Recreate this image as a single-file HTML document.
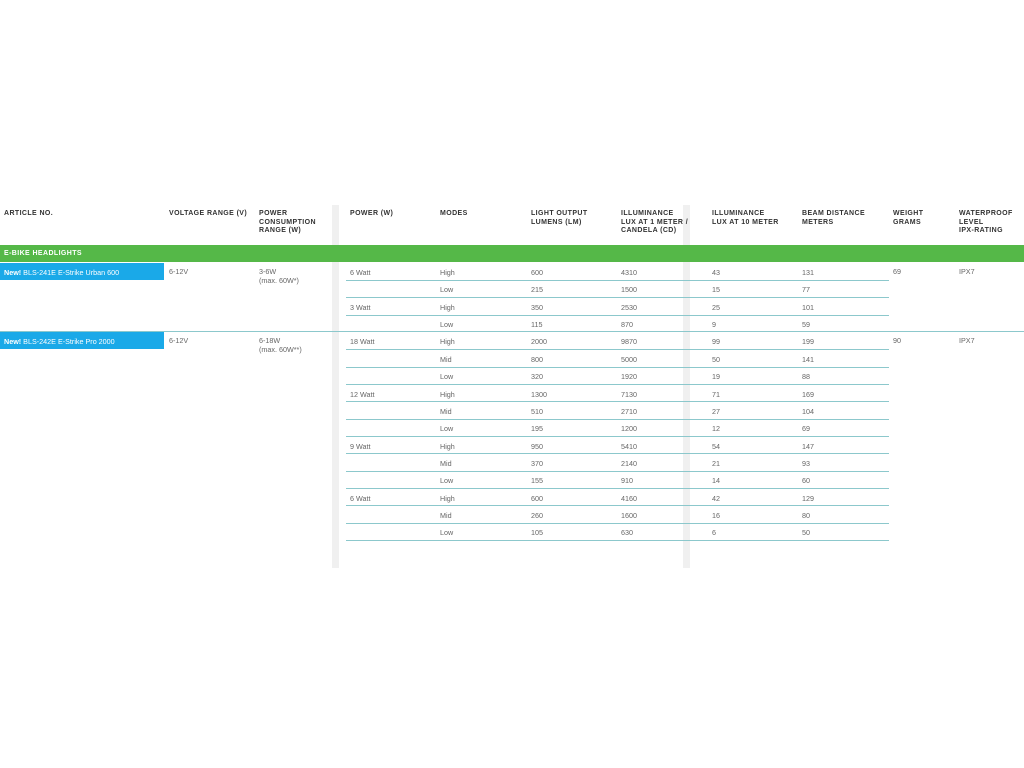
<!DOCTYPE html><html><head><meta charset="utf-8"><style>
body{margin:0;width:1024px;height:768px;background:#fff;position:relative;overflow:hidden;font-family:"Liberation Sans",sans-serif;}
.a{position:absolute;}
.h{position:absolute;top:210px;font-size:7px;font-weight:bold;color:#333;letter-spacing:0.4px;line-height:8.5px;}
.sep{position:absolute;top:205px;height:363px;width:7px;background:#f0f0f0;}
.r{position:absolute;left:0;width:1024px;height:17.35px;font-size:7.2px;color:#666;}
.r span{position:absolute;top:5px;}
.ln{position:absolute;left:346px;width:543px;height:1px;background:#8cc8cc;}
.fl{position:absolute;left:0;width:1024px;height:1px;background:#8cc8cc;}
.blue{position:absolute;left:0;width:164px;height:17px;background:#1aa9e8;color:#fff;font-size:7.2px;}
.blue span{position:absolute;left:4px;top:5px;}
.t{position:absolute;font-size:7.2px;color:#666;line-height:9px;}
</style></head><body>
<div class="sep" style="left:332px"></div>
<div class="sep" style="left:683px"></div>
<div class="h" style="left:4px">ARTICLE NO.</div>
<div class="h" style="left:169px">VOLTAGE RANGE (V)</div>
<div class="h" style="left:259px">POWER<br>CONSUMPTION<br>RANGE (W)</div>
<div class="h" style="left:350px">POWER (W)</div>
<div class="h" style="left:440px">MODES</div>
<div class="h" style="left:531px">LIGHT OUTPUT<br>LUMENS (LM)</div>
<div class="h" style="left:621px">ILLUMINANCE<br>LUX AT 1 METER /<br>CANDELA (CD)</div>
<div class="h" style="left:712px">ILLUMINANCE<br>LUX AT 10 METER</div>
<div class="h" style="left:802px">BEAM DISTANCE<br>METERS</div>
<div class="h" style="left:893px">WEIGHT<br>GRAMS</div>
<div class="h" style="left:959px">WATERPROOF<br>LEVEL<br>IPX-RATING</div>
<div class="a" style="left:0;top:245px;width:1024px;height:17px;background:#55b848;color:#fff;font-size:7px;font-weight:bold;letter-spacing:0.4px"><span style="position:absolute;left:4px;top:5px">E-BIKE HEADLIGHTS</span></div>
<div class="blue" style="top:263px"><span><b>New!</b> BLS-241E E-Strike Urban 600</span></div>
<div class="blue" style="top:332px"><span><b>New!</b> BLS-242E E-Strike Pro 2000</span></div>
<div class="t" style="left:169px;top:267px">6-12V</div>
<div class="t" style="left:259px;top:267px">3-6W<br>(max. 60W*)</div>
<div class="t" style="left:893px;top:267px">69</div>
<div class="t" style="left:959px;top:267px">IPX7</div>
<div class="t" style="left:169px;top:336px">6-12V</div>
<div class="t" style="left:259px;top:336px">6-18W<br>(max. 60W**)</div>
<div class="t" style="left:893px;top:336px">90</div>
<div class="t" style="left:959px;top:336px">IPX7</div>

<div class="r" style="top:263px"><span style="left:350px">6 Watt</span><span style="left:440px">High</span><span style="left:531px">600</span><span style="left:621px">4310</span><span style="left:712px">43</span><span style="left:802px">131</span></div>
<div class="ln" style="top:280px"></div>
<div class="r" style="top:280.4px"><span style="left:440px">Low</span><span style="left:531px">215</span><span style="left:621px">1500</span><span style="left:712px">15</span><span style="left:802px">77</span></div>
<div class="ln" style="top:297px"></div>
<div class="r" style="top:297.7px"><span style="left:350px">3 Watt</span><span style="left:440px">High</span><span style="left:531px">350</span><span style="left:621px">2530</span><span style="left:712px">25</span><span style="left:802px">101</span></div>
<div class="ln" style="top:315px"></div>
<div class="r" style="top:315px"><span style="left:440px">Low</span><span style="left:531px">115</span><span style="left:621px">870</span><span style="left:712px">9</span><span style="left:802px">59</span></div>
<div class="fl" style="top:331px"></div>

<div class="r" style="top:332.4px"><span style="left:350px">18 Watt</span><span style="left:440px">High</span><span style="left:531px">2000</span><span style="left:621px">9870</span><span style="left:712px">99</span><span style="left:802px">199</span></div>
<div class="ln" style="top:349px"></div>
<div class="r" style="top:349.8px"><span style="left:440px">Mid</span><span style="left:531px">800</span><span style="left:621px">5000</span><span style="left:712px">50</span><span style="left:802px">141</span></div>
<div class="ln" style="top:367px"></div>
<div class="r" style="top:367.1px"><span style="left:440px">Low</span><span style="left:531px">320</span><span style="left:621px">1920</span><span style="left:712px">19</span><span style="left:802px">88</span></div>
<div class="ln" style="top:384px"></div>
<div class="r" style="top:384.5px"><span style="left:350px">12 Watt</span><span style="left:440px">High</span><span style="left:531px">1300</span><span style="left:621px">7130</span><span style="left:712px">71</span><span style="left:802px">169</span></div>
<div class="ln" style="top:401px"></div>
<div class="r" style="top:401.8px"><span style="left:440px">Mid</span><span style="left:531px">510</span><span style="left:621px">2710</span><span style="left:712px">27</span><span style="left:802px">104</span></div>
<div class="ln" style="top:419px"></div>
<div class="r" style="top:419.2px"><span style="left:440px">Low</span><span style="left:531px">195</span><span style="left:621px">1200</span><span style="left:712px">12</span><span style="left:802px">69</span></div>
<div class="ln" style="top:436px"></div>
<div class="r" style="top:436.5px"><span style="left:350px">9 Watt</span><span style="left:440px">High</span><span style="left:531px">950</span><span style="left:621px">5410</span><span style="left:712px">54</span><span style="left:802px">147</span></div>
<div class="ln" style="top:453px"></div>
<div class="r" style="top:453.9px"><span style="left:440px">Mid</span><span style="left:531px">370</span><span style="left:621px">2140</span><span style="left:712px">21</span><span style="left:802px">93</span></div>
<div class="ln" style="top:471px"></div>
<div class="r" style="top:471.2px"><span style="left:440px">Low</span><span style="left:531px">155</span><span style="left:621px">910</span><span style="left:712px">14</span><span style="left:802px">60</span></div>
<div class="ln" style="top:488px"></div>
<div class="r" style="top:488.6px"><span style="left:350px">6 Watt</span><span style="left:440px">High</span><span style="left:531px">600</span><span style="left:621px">4160</span><span style="left:712px">42</span><span style="left:802px">129</span></div>
<div class="ln" style="top:505px"></div>
<div class="r" style="top:505.9px"><span style="left:440px">Mid</span><span style="left:531px">260</span><span style="left:621px">1600</span><span style="left:712px">16</span><span style="left:802px">80</span></div>
<div class="ln" style="top:523px"></div>
<div class="r" style="top:523.3px"><span style="left:440px">Low</span><span style="left:531px">105</span><span style="left:621px">630</span><span style="left:712px">6</span><span style="left:802px">50</span></div>
<div class="ln" style="top:540px"></div>
</body></html>
